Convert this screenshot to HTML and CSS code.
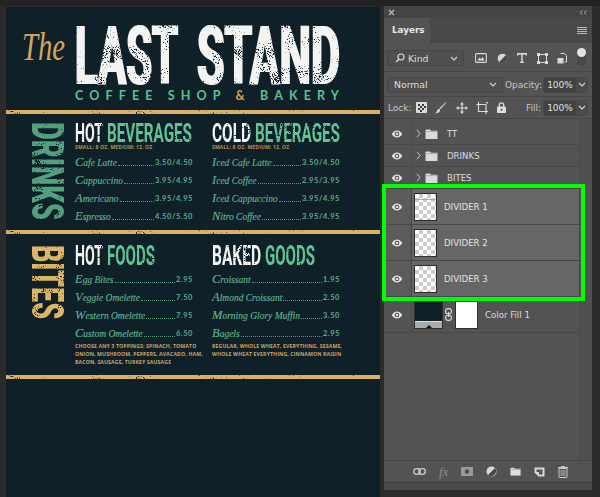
FILE: index.html
```html
<!DOCTYPE html>
<html lang="en">
<head>
<meta charset="utf-8">
<title>Last Stand menu - Layers</title>
<link rel="stylesheet" href="styles.css">
</head>
<body>
<svg class="defs" aria-hidden="true">
  <defs>
    <filter id="distress-xl" x="-0.05" y="-0.05" width="1.1" height="1.1" color-interpolation-filters="sRGB">
      <feMorphology in="SourceGraphic" operator="dilate" radius="1 0" result="fat"/>
      <feTurbulence type="fractalNoise" baseFrequency="0.05" numOctaves="2" seed="12" result="lo"/>
      <feTurbulence type="fractalNoise" baseFrequency="0.8" numOctaves="2" seed="3" result="hi"/>
      <feComposite in="lo" in2="hi" operator="arithmetic" k1="0" k2="-8" k3="-8" k4="10.4" result="m"/>
      <feComposite in="fat" in2="m" operator="in"/>
      <feGaussianBlur stdDeviation="0.3"/>
    </filter>
    <filter id="distress" x="-0.05" y="-0.05" width="1.1" height="1.1" color-interpolation-filters="sRGB">
      <feTurbulence type="fractalNoise" baseFrequency="0.08" numOctaves="2" seed="4" result="lo"/>
      <feTurbulence type="fractalNoise" baseFrequency="0.9" numOctaves="2" seed="5" result="hi"/>
      <feComposite in="lo" in2="hi" operator="arithmetic" k1="0" k2="-8" k3="-8" k4="11.4" result="m"/>
      <feComposite in="SourceGraphic" in2="m" operator="in"/>
      <feGaussianBlur stdDeviation="0.3"/>
    </filter>
    <filter id="distress-heavy" x="-0.05" y="-0.05" width="1.1" height="1.1" color-interpolation-filters="sRGB">
      <feTurbulence type="fractalNoise" baseFrequency="0.1" numOctaves="2" seed="9" result="lo"/>
      <feTurbulence type="fractalNoise" baseFrequency="0.9" numOctaves="2" seed="2" result="hi"/>
      <feComposite in="lo" in2="hi" operator="arithmetic" k1="0" k2="-8" k3="-8" k4="10.6" result="m"/>
      <feComposite in="SourceGraphic" in2="m" operator="in"/>
      <feGaussianBlur stdDeviation="0.3"/>
    </filter>
    <filter id="distress-side" x="-0.05" y="-0.05" width="1.1" height="1.1" color-interpolation-filters="sRGB">
      <feTurbulence type="fractalNoise" baseFrequency="0.08" numOctaves="2" seed="21" result="lo"/>
      <feTurbulence type="fractalNoise" baseFrequency="0.8" numOctaves="2" seed="7" result="hi"/>
      <feComposite in="lo" in2="hi" operator="arithmetic" k1="0" k2="-8" k3="-8" k4="10.8" result="m"/>
      <feComposite in="SourceGraphic" in2="m" operator="in"/>
      <feGaussianBlur stdDeviation="0.3"/>
    </filter>
    <filter id="worn" x="0" y="-0.2" width="1" height="1.4" color-interpolation-filters="sRGB">
      <feTurbulence type="fractalNoise" baseFrequency="0.04 0.3" numOctaves="2" seed="6" result="lo"/>
      <feTurbulence type="fractalNoise" baseFrequency="0.7" numOctaves="2" seed="8" result="hi"/>
      <feComposite in="lo" in2="hi" operator="arithmetic" k1="0" k2="-6" k3="-6" k4="8.6" result="m"/>
      <feComposite in="SourceGraphic" in2="m" operator="in"/>
      <feGaussianBlur stdDeviation="0.25"/>
    </filter>
    <symbol id="eye" viewBox="0 0 13 9">
      <path d="M0.5 4.5C2.5 1.6 4.4 0.5 6.5 0.5s4 1.1 6 4c-2 2.9-3.9 4-6 4s-4-1.1-6-4z" fill="#e4e4e4"/>
      <circle cx="6.5" cy="4.5" r="2.6" fill="#4a4a4a"/>
      <circle cx="6.5" cy="4.5" r="1.5" fill="#e4e4e4"/>
    </symbol>
    <symbol id="folder" viewBox="0 0 13 10">
      <path d="M0.5 10V1.2q0-.7.7-.7h3.6q.6 0 .8.6l.2.6h6.7V10z" fill="#dcdcdc"/>
      <path d="M0.5 2.6h12" stroke="#8e8e8e" stroke-width=".6"/>
    </symbol>
    <symbol id="chev" viewBox="0 0 5 9">
      <path d="M1 .8 4 4.5 1 8.2" fill="none" stroke="#c4c4c4" stroke-width="1"/>
    </symbol>
    <symbol id="down" viewBox="0 0 8 5">
      <path d="M1 1l3 3 3-3" fill="none" stroke="#d4d4d4" stroke-width="1.1"/>
    </symbol>
  </defs>
</svg>

<main class="poster">
  <header class="masthead">
    <svg class="the" width="43" height="32" viewBox="0 0 63 32" preserveAspectRatio="none"><text class="the-text" x="0" y="27" textLength="63" lengthAdjust="spacingAndGlyphs">The</text></svg>
    <div class="brand">
      <div class="brand-name">
        <svg class="rough-xl" width="103" height="58" viewBox="0 0 261 72" preserveAspectRatio="none"><text class="w w-bold fill-white" y="72" textLength="261" lengthAdjust="spacingAndGlyphs">LAST</text></svg>
        <svg class="rough-xl" width="143" height="58" viewBox="0 0 344 72" preserveAspectRatio="none"><text class="w w-bold fill-white" y="72" textLength="344" lengthAdjust="spacingAndGlyphs">STAND</text></svg>
      </div>
      <p class="tagline">COFFEE SHOP <span class="amp">&amp;</span> BAKERY</p>
    </div>
  </header>
  <div class="divider"></div>

  <section class="band band-drinks">
    <svg class="side rough-side" width="32" height="98" viewBox="0 0 72 383" preserveAspectRatio="none"><text class="w fill-side-green" transform="rotate(90)" textLength="383" lengthAdjust="spacingAndGlyphs">DRINKS</text></svg>
    <div class="col col-a">
      <h2 class="heading">
        <svg class="rough-heavy" width="28" height="19" viewBox="0 0 211 72" preserveAspectRatio="none"><text class="w w-bold fill-white" y="72" textLength="211" lengthAdjust="spacingAndGlyphs">HOT</text></svg>
        <svg class="rough" width="85" height="19" viewBox="0 0 608 72" preserveAspectRatio="none"><text class="w w-bold fill-green" y="72" textLength="608" lengthAdjust="spacingAndGlyphs">BEVERAGES</text></svg>
      </h2>
      <p class="sizes">SMALL: 8 OZ. MEDIUM: 12. OZ</p>
      <ul class="items">
        <li class="item"><span class="name">Cafe Latte</span><span class="dots"></span><span class="price">3.50/4.50</span></li>
        <li class="item"><span class="name">Cappuccino</span><span class="dots"></span><span class="price">3.95/4.95</span></li>
        <li class="item"><span class="name">Americano</span><span class="dots"></span><span class="price">3.95/4.95</span></li>
        <li class="item"><span class="name">Espresso</span><span class="dots"></span><span class="price">4.50/5.50</span></li>
      </ul>
    </div>
    <div class="col col-b">
      <h2 class="heading">
        <svg class="rough-heavy" width="39" height="19" viewBox="0 0 283 72" preserveAspectRatio="none"><text class="w w-bold fill-white" y="72" textLength="283" lengthAdjust="spacingAndGlyphs">COLD</text></svg>
        <svg class="rough-heavy" width="85" height="19" viewBox="0 0 608 72" preserveAspectRatio="none"><text class="w w-bold fill-green" y="72" textLength="608" lengthAdjust="spacingAndGlyphs">BEVERAGES</text></svg>
      </h2>
      <p class="sizes">SMALL: 8 OZ. MEDIUM: 12. OZ</p>
      <ul class="items">
        <li class="item"><span class="name">Iced Cafe Latte</span><span class="dots"></span><span class="price">3.50/4.50</span></li>
        <li class="item"><span class="name">Iced Coffee</span><span class="dots"></span><span class="price">2.95/3.95</span></li>
        <li class="item"><span class="name">Iced Cappuccino</span><span class="dots"></span><span class="price">3.95/4.95</span></li>
        <li class="item"><span class="name">Nitro Coffee</span><span class="dots"></span><span class="price">3.95/4.95</span></li>
      </ul>
    </div>
  </section>
  <div class="divider"></div>

  <section class="band band-bites">
    <svg class="side rough-side" width="32" height="74" viewBox="0 0 72 295" preserveAspectRatio="none"><text class="w fill-side-gold" transform="rotate(90)" textLength="295" lengthAdjust="spacingAndGlyphs">BITES</text></svg>
    <div class="col col-a">
      <h2 class="heading">
        <svg class="rough-heavy" width="28" height="20" viewBox="0 0 211 72" preserveAspectRatio="none"><text class="w w-bold fill-white" y="72" textLength="211" lengthAdjust="spacingAndGlyphs">HOT</text></svg>
        <svg class="rough" width="48" height="20" viewBox="0 0 356 72" preserveAspectRatio="none"><text class="w w-bold fill-green" y="72" textLength="356" lengthAdjust="spacingAndGlyphs">FOODS</text></svg>
      </h2>
      <ul class="items items-food">
        <li class="item"><span class="name">Egg Bites</span><span class="dots"></span><span class="price">2.95</span></li>
        <li class="item"><span class="name">Veggie Omelette</span><span class="dots"></span><span class="price">7.50</span></li>
        <li class="item"><span class="name">Western Omelette</span><span class="dots"></span><span class="price">7.95</span></li>
        <li class="item"><span class="name">Custom Omelette</span><span class="dots"></span><span class="price">6.50</span></li>
      </ul>
      <p class="note">CHOOSE ANY 3 TOPPINGS: SPINACH, TOMATO<br>ONION, MUSHROOM, PEPPERS, AVACADO, HAM,<br>BACON, SAUSAGE, TURKEY SAUSAGE</p>
    </div>
    <div class="col col-b">
      <h2 class="heading">
        <svg class="rough-heavy" width="49" height="20" viewBox="0 0 356 72" preserveAspectRatio="none"><text class="w w-bold fill-white" y="72" textLength="356" lengthAdjust="spacingAndGlyphs">BAKED</text></svg>
        <svg class="rough" width="50" height="20" viewBox="0 0 372 72" preserveAspectRatio="none"><text class="w w-bold fill-green" y="72" textLength="372" lengthAdjust="spacingAndGlyphs">GOODS</text></svg>
      </h2>
      <ul class="items items-food">
        <li class="item"><span class="name">Croissant</span><span class="dots"></span><span class="price">1.95</span></li>
        <li class="item"><span class="name">Almond Croissant</span><span class="dots"></span><span class="price">2.50</span></li>
        <li class="item"><span class="name">Morning Glory Muffin</span><span class="dots"></span><span class="price">3.50</span></li>
        <li class="item"><span class="name">Bagels</span><span class="dots"></span><span class="price">2.95</span></li>
      </ul>
      <p class="note">REGULAR, WHOLE WHEAT, EVERYTHING, SESAME,<br>WHOLE WHEAT EVERYTHING, CINNAMON RAISIN</p>
    </div>
  </section>
  <div class="divider"></div>
</main>

<aside class="panel">
  <div class="drag">
    <svg width="7" height="7" viewBox="0 0 7 7"><path d="M1 1l5 5M6 1 1 6" stroke="#bdbdbd" stroke-width="1.2"/></svg>
    <svg width="8" height="5" viewBox="0 0 8 5"><path d="M3.5.5 1 2.5l2.5 2M7.5.5 5 2.5l2.5 2" fill="none" stroke="#aaa" stroke-width=".9"/></svg>
  </div>
  <div class="tabs">
    <div class="tab">Layers</div>
    <svg class="menu-icon" width="10" height="7" viewBox="0 0 10 7"><path d="M0 .5h10M0 2.5h10M0 4.5h10M0 6.5h10" stroke="#b8b8b8"/></svg>
  </div>

  <div class="tool-row row-filter">
    <div class="select select-kind">
      <svg width="10" height="10" viewBox="0 0 10 10"><circle cx="6" cy="4" r="3" fill="none" stroke="#ddd" stroke-width="1.1"/><path d="M3.8 6.2 1 9" stroke="#ddd" stroke-width="1.3"/></svg>
      <span class="select-label">Kind</span>
      <svg class="caret" width="8" height="5"><use href="#down"/></svg>
    </div>
    <div class="filter-icons">
      <svg width="12" height="10" viewBox="0 0 12 10"><rect x=".6" y=".6" width="10.8" height="8.8" rx="1" fill="none" stroke="#d8d8d8" stroke-width="1.1"/><path d="M2.5 7.5 4.5 4.5 6 6.3 7.5 3.8 9.5 7.5z" fill="#d8d8d8"/></svg>
      <svg width="11" height="11" viewBox="0 0 11 11"><circle cx="5.5" cy="5.5" r="4.8" fill="#d8d8d8"/><path d="M8.9 2.1A4.8 4.8 0 0 1 2.1 8.9z" fill="#4a4a4a"/></svg>
      <svg class="glyph-t" width="10" height="10" viewBox="0 0 10 10"><path d="M.7 2.6V.8h8.6v1.8M5 .8v8.4M3.2 9.2h3.6" fill="none" stroke="#dcdcdc" stroke-width="1.4"/></svg>
      <svg width="11" height="11" viewBox="0 0 11 11"><rect x="1.5" y="1.5" width="8" height="8" fill="none" stroke="#d8d8d8"/><path d="M0 0h3v3H0zM8 0h3v3H8zM0 8h3v3H0zM8 8h3v3H8z" fill="#d8d8d8"/></svg>
      <svg width="10" height="11" viewBox="0 0 10 11"><path d="M3.5.5h4l2 2v6.5h-2" fill="none" stroke="#d8d8d8"/><rect x=".5" y="5" width="6" height="5.5" fill="#d8d8d8"/></svg>
    </div>
    <div class="toggle"><span class="knob"></span></div>
  </div>

  <div class="tool-row row-blend">
    <div class="select select-blend"><span class="select-label">Normal</span><svg class="caret" width="8" height="5"><use href="#down"/></svg></div>
    <span class="label label-opacity">Opacity:</span>
    <div class="field"><span class="field-value">100%</span><span class="field-caret"><svg width="8" height="5"><use href="#down"/></svg></span></div>
  </div>

  <div class="tool-row row-lock">
    <span class="label label-lock">Lock:</span>
    <div class="lock-icons">
      <svg width="11" height="11" viewBox="0 0 11 11"><rect width="11" height="11" rx="1" fill="#dcdcdc"/><path d="M2 2h2v2H2zM6 2h2v2H6zM4 4h2v2H4zM8 4h2v2H8zM2 6h2v2H2zM6 6h2v2H6zM4 8h2v2H4z" fill="#3a3a3a"/></svg>
      <svg width="12" height="12" viewBox="0 0 12 12"><path d="M11.4.6 5.600 7 4.600 6 10.800.2z" fill="#dcdcdc"/><path d="M4.200 6.600 5.200 7.800C5 10 3 11.400.6 11.400 2 10.400 1.900 7.500 4.200 6.600z" fill="#dcdcdc"/></svg>
      <svg width="12" height="12" viewBox="0 0 12 12"><path d="M6 0 8 2.400H6.600v3h3V4L12 6 9.600 8V6.600h-3v3H8L6 12 4 9.600h1.400v-3h-3V8L0 6l2.400-2v1.400h3v-3H4z" fill="#dcdcdc"/></svg>
      <svg width="13" height="12" viewBox="0 0 13 12"><path d="M2.500 0v9.500H12M.5 2.500H10V12" fill="none" stroke="#dcdcdc" stroke-width="1.100"/><path d="M10 .5l2 0M11 0v2" stroke="#dcdcdc" stroke-width=".8"/></svg>
      <svg width="9" height="11" viewBox="0 0 9 11"><path d="M2.300 5V3a2.200 2.200 0 0 1 4.400 0v2" fill="none" stroke="#dcdcdc" stroke-width="1.200"/><rect y="4.600" width="9" height="6.400" rx=".8" fill="#dcdcdc"/><circle cx="4.500" cy="7.800" r="1" fill="#444"/></svg>
    </div>
    <span class="label label-fill">Fill:</span>
    <div class="field"><span class="field-value">100%</span><span class="field-caret"><svg width="8" height="5"><use href="#down"/></svg></span></div>
  </div>

  <div class="list-wrap">
    <ul class="layers">
      <li class="layer group">
        <span class="eye-cell"><svg width="12" height="8"><use href="#eye"/></svg></span>
        <span class="layer-main"><svg class="chev" width="5" height="9"><use href="#chev"/></svg><svg class="folder" width="13" height="10"><use href="#folder"/></svg><span class="layer-name">TT</span></span>
      </li>
      <li class="layer group">
        <span class="eye-cell"><svg width="12" height="8"><use href="#eye"/></svg></span>
        <span class="layer-main"><svg class="chev" width="5" height="9"><use href="#chev"/></svg><svg class="folder" width="13" height="10"><use href="#folder"/></svg><span class="layer-name">DRINKS</span></span>
      </li>
      <li class="layer group">
        <span class="eye-cell"><svg width="12" height="8"><use href="#eye"/></svg></span>
        <span class="layer-main"><svg class="chev" width="5" height="9"><use href="#chev"/></svg><svg class="folder" width="13" height="10"><use href="#folder"/></svg><span class="layer-name">BITES</span></span>
      </li>
      <li class="layer selected">
        <span class="eye-cell"><svg width="12" height="8"><use href="#eye"/></svg></span>
        <span class="layer-main"><span class="thumb thumb-line"></span><span class="layer-name thumb-name">DIVIDER 1</span></span>
      </li>
      <li class="layer selected">
        <span class="eye-cell"><svg width="12" height="8"><use href="#eye"/></svg></span>
        <span class="layer-main"><span class="thumb"></span><span class="layer-name thumb-name">DIVIDER 2</span></span>
      </li>
      <li class="layer selected">
        <span class="eye-cell"><svg width="12" height="8"><use href="#eye"/></svg></span>
        <span class="layer-main"><span class="thumb"></span><span class="layer-name thumb-name">DIVIDER 3</span></span>
      </li>
      <li class="layer fill-layer">
        <span class="eye-cell"><svg width="12" height="8"><use href="#eye"/></svg></span>
        <span class="layer-main">
          <span class="fill-thumb"><span class="fill-ramp"><svg width="6" height="3" viewBox="0 0 6 3"><path d="M0 3 3 0l3 3z" fill="#111"/></svg></span></span>
          <svg class="link" width="7" height="13" viewBox="0 0 7 13"><rect x=".6" y=".6" width="5.800" height="5.200" rx="2.400" fill="none" stroke="#d8d8d8" stroke-width="1.100"/><rect x=".6" y="7.200" width="5.800" height="5.200" rx="2.400" fill="none" stroke="#d8d8d8" stroke-width="1.100"/><path d="M3.500 4v5" stroke="#d8d8d8" stroke-width="1.100"/></svg>
          <span class="mask-thumb"></span>
          <span class="layer-name fill-name">Color Fill 1</span>
        </span>
      </li>
    </ul>
    <div class="scroll-track"></div>
  </div>

  <div class="footer">
    <svg width="13" height="7" viewBox="0 0 13 7"><rect x=".7" y=".7" width="6.500" height="5.600" rx="2.800" fill="none" stroke="#cfcfcf" stroke-width="1.300"/><rect x="5.800" y=".7" width="6.500" height="5.600" rx="2.800" fill="none" stroke="#cfcfcf" stroke-width="1.300"/></svg>
    <span class="fx">fx</span>
    <svg width="12" height="9" viewBox="0 0 12 9"><rect width="12" height="9" fill="#9a9a9a"/><circle cx="6" cy="4.500" r="2.200" fill="#4e4e4e"/></svg>
    <svg width="11" height="11" viewBox="0 0 11 11"><circle cx="5.500" cy="5.500" r="5" fill="#d8d8d8"/><path d="M9 2A5 5 0 0 1 2 9z" fill="#444"/></svg>
    <svg width="11" height="9" viewBox="0 0 13 10"><use href="#folder"/></svg>
    <svg width="11" height="10" viewBox="0 0 11 10"><path d="M.5.500h10v9h-6l-4-4z" fill="#d8d8d8"/><path d="M2.500 2.500h6v5H5V5H2.500z" fill="#555"/></svg>
    <svg width="10" height="12" viewBox="0 0 10 12"><path d="M3.500 1V.5h3V1M0 1.500h10" stroke="#c8c8c8" fill="none"/><path d="M1 2.500h8V11q0 .5-.5.500h-7Q1 11.500 1 11z" fill="none" stroke="#c8c8c8"/><path d="M3.200 4v6M5 4v6M6.800 4v6" stroke="#c8c8c8" stroke-width=".8"/></svg>
  </div>
  <div class="grip"></div>

  <div class="highlight"></div>
</aside>
</body>
</html>
```

FILE: styles.css
```css
* { box-sizing: border-box; }

html, body { height: 100%; }

body {
  margin: 0;
  background: #2b2b2b;
  display: flex;
  align-items: flex-start;
  overflow: hidden;
  border-top: 6px solid #222;
  font-family: "DejaVu Sans", sans-serif;
}

.defs { position: absolute; width: 0; height: 0; }

svg { display: block; overflow: visible; flex: none; }

ul { list-style: none; margin: 0; padding: 0; }
h2, p { margin: 0; font-weight: normal; }

/* ---------- poster ---------- */
.poster {
  width: 374px;
  height: 491px;
  margin: 1px 0 0 6px;
  background: #102029;
  flex: none;
}

.masthead {
  height: 103px;
  padding: 19px 0 0 16px;
  display: flex;
  gap: 10px;
}

.the { margin-top: 7px; }
.the-text {
  font-family: "Liberation Serif", serif;
  font-style: italic;
  font-size: 40px;
  fill: #d3a65c;
}

.brand-name { display: flex; gap: 19px; }
.tagline {
  margin-top: 5px;
  height: 13px;
  font-family: "Lato", sans-serif;
  font-weight: 700;
  font-size: 12.500px;
  line-height: 13px;
  letter-spacing: 6.150px;
  color: #5cc08e;
  white-space: nowrap;
}
.amp { color: #d9a24f; }

.w {
  font-family: "Roboto", "Liberation Sans", sans-serif;
  font-weight: 900;
  font-size: 101px;
}
.w-bold { font-weight: 700; }

.fill-white { fill: #f4f4f2; }
.fill-green { fill: #62c494; }
.fill-side-green { fill: #53a07e; }
.fill-side-gold { fill: #dcb565; }

.rough-xl { filter: url(#distress-xl); }
.rough { filter: url(#distress); }
.rough-heavy { filter: url(#distress-heavy); }
.rough-side { filter: url(#distress-side); }

.divider {
  height: 4px;
  background: #dcb064;
  filter: url(#worn);
}

.band {
  display: flex;
  padding-left: 26px;
}
.band-drinks { height: 116px; padding-top: 8px; }
.band-bites { height: 141px; padding-top: 11px; }

.side { margin-right: 11px; }

.col-a { width: 118px; margin-right: 19px; flex: none; }
.col-b { width: 128px; flex: none; }
.band-drinks .col { padding-top: 1px; }

.heading { display: flex; gap: 4px; }

.sizes {
  margin-top: 2px;
  height: 9px;
  font-family: "Open Sans", sans-serif;
  font-weight: 700;
  font-size: 5px;
  line-height: 7px;
  letter-spacing: .18px;
  color: #b8924f;
  white-space: nowrap;
}

.items-food { margin-top: 5px; }

.item {
  height: 18px;
  display: flex;
  align-items: center;
}

.name {
  font-family: "Liberation Serif", serif;
  font-style: italic;
  font-size: 9.500px;
  color: #5fb28c;
  white-space: nowrap;
  -webkit-text-stroke: .15px #5fb28c;
}
.name::first-letter { font-size: 12.500px; }

.dots {
  flex: 1;
  height: 7px;
  margin: 0 1px;
  border-bottom: 1px dotted #4f9c7b;
}

.price {
  font-family: "Lato", sans-serif;
  font-weight: 700;
  font-size: 7.500px;
  letter-spacing: .55px;
  color: #5cab88;
  white-space: nowrap;
}

.note {
  font-family: "Open Sans", sans-serif;
  font-weight: 700;
  font-size: 5.200px;
  line-height: 8px;
  letter-spacing: .12px;
  color: #c8a468;
  white-space: nowrap;
}

/* ---------- layers panel ---------- */
.panel {
  position: relative;
  width: 208px;
  height: 484px;
  margin-left: 4px;
  background: #535353;
  color: #dedede;
  font-size: 9px;
  display: flex;
  flex-direction: column;
  flex: none;
  border-radius: 2px 2px 0 0;
}

.drag {
  height: 12px;
  padding: 0 5px 0 4px;
  background: #454545;
  display: flex;
  justify-content: space-between;
  align-items: center;
}

.tabs {
  height: 25px;
  background: #494949;
  display: flex;
  justify-content: space-between;
  align-items: center;
  padding-right: 5px;
}

.tab {
  width: 46px;
  height: 25px;
  background: #535353;
  padding-left: 8px;
  line-height: 24px;
  font-weight: 700;
  font-size: 8.800px;
  color: #e6e6e6;
}

.tool-row {
  display: flex;
  align-items: center;
  padding: 0 4px 0 3px;
  border-bottom: 1px solid #464646;
}

.row-filter { height: 29px; padding-top: 2px; }
.row-blend { height: 25px; padding-top: 1px; }
.row-lock { height: 22px; padding-top: 0; }

.select {
  height: 16px;
  border: 1px solid #464646;
  border-radius: 2px;
  background: #4f4f4f;
  display: flex;
  align-items: center;
  padding: 0 5px;
  flex: none;
}
.select-kind { width: 77px; gap: 3px; padding-left: 7px; }
.select-blend { width: 116px; }
.select-label { flex: 1; font-size: 9.300px; }
.select-blend .select-label { padding-left: 1px; }

.filter-icons {
  display: flex;
  align-items: center;
  justify-content: space-between;
  width: 92px;
  margin-left: 11px;
}

.toggle {
  position: relative;
  width: 9px;
  height: 15px;
  margin-left: 10px;
  border-radius: 5px;
  border: 1px solid #454545;
  background: #4a4a4a;
}
.knob {
  position: absolute;
  top: -4px;
  left: -1px;
  width: 9px;
  height: 9px;
  border-radius: 50%;
  background: #e4e4e4;
}

.label { color: #c6c6c6; font-size: 9px; white-space: nowrap; }
.label-opacity { margin-left: 2px; }
.label-lock { width: 27px; margin-left: 1px; }
.label-fill { margin-left: auto; }

.lock-icons {
  display: flex;
  align-items: center;
  justify-content: space-between;
  width: 90px;
  margin-left: 1px;
}

.field {
  width: 45px;
  height: 16px;
  margin-left: 2px;
  border: 1px solid #484848;
  border-radius: 2px;
  display: flex;
  align-items: stretch;
  flex: none;
}
.row-blend .field { margin-left: auto; }
.field-value {
  width: 32px;
  background: #424242;
  text-align: center;
  line-height: 14px;
  font-size: 9px;
  color: #e0e0e0;
}
.field-caret {
  flex: 1;
  background: #4b4b4b;
  display: flex;
  align-items: center;
  justify-content: center;
}

.list-wrap {
  flex: 1;
  padding-top: 4px;
  display: flex;
  min-height: 0;
}

.layers { width: 195px; flex: none; }
.scroll-track { flex: 1; border-left: 1px solid #494949; background: #505050; margin-top: -4px; }

.layer {
  display: flex;
  border-bottom: 1px solid #494949;
}
.group { height: 22px; }
.selected { height: 36px; background: #666; }
.fill-layer { height: 36px; }

.eye-cell {
  width: 28px;
  border-right: 1px solid #494949;
  display: flex;
  align-items: center;
  justify-content: center;
  padding-right: 2px;
  flex: none;
}
.selected .eye-cell { background: #5b5b5b; }

.layer-main {
  flex: 1;
  display: flex;
  align-items: center;
  min-width: 0;
}

.chev { margin-left: 4px; }
.folder { margin-left: 4px; }

.layer-name {
  font-size: 8.600px;
  color: #dcdcdc;
  white-space: nowrap;
}
.group .layer-name { margin-left: 9px; }
.thumb-name { margin-left: 7px; color: #e2e2e2; }
.fill-name { margin-left: 7px; }

.thumb {
  width: 23px;
  height: 28px;
  margin-left: 2px;
  border: 1px solid #2e2e2e;
  background-color: #fff;
  background-image:
    linear-gradient(45deg, #ccc 25%, transparent 25%, transparent 75%, #ccc 75%),
    linear-gradient(45deg, #ccc 25%, transparent 25%, transparent 75%, #ccc 75%);
  background-size: 8px 8px;
  background-position: 0 0, 4px 4px;
  flex: none;
}
.thumb-line {
  background-image:
    linear-gradient(#d7a860, #d7a860),
    linear-gradient(45deg, #ccc 25%, transparent 25%, transparent 75%, #ccc 75%),
    linear-gradient(45deg, #ccc 25%, transparent 25%, transparent 75%, #ccc 75%);
  background-size: 100% 1px, 8px 8px, 8px 8px;
  background-position: 0 5px, 0 0, 4px 4px;
  background-repeat: no-repeat, repeat, repeat;
}

.fill-thumb {
  width: 29px;
  height: 28px;
  margin-left: 2px;
  border: 1px solid #2e2e2e;
  background: #102029;
  display: flex;
  align-items: flex-end;
  flex: none;
}
.fill-ramp {
  width: 100%;
  height: 7px;
  background: #aaa;
  border-top: 1px solid #e0e0e0;
  display: flex;
  align-items: flex-end;
  justify-content: center;
}

.link { margin-left: 2px; }

.mask-thumb {
  width: 23px;
  height: 28px;
  margin-left: 3px;
  border: 1px solid #2e2e2e;
  background: #fff;
  flex: none;
}

.footer {
  height: 23px;
  border-top: 1px solid #464646;
  border-bottom: 1px solid #3e3e3e;
  padding: 0 24px 0 29px;
  display: flex;
  align-items: center;
  justify-content: space-between;
}

.fx {
  font-family: "Liberation Serif", serif;
  font-style: italic;
  font-size: 13px;
  color: #8c8c8c;
}

.grip { height: 7px; background: #4b4b4b; }

.highlight {
  position: absolute;
  left: -2px;
  top: 178px;
  width: 203px;
  height: 117px;
  border: 4px solid #00ff00;
}
```
